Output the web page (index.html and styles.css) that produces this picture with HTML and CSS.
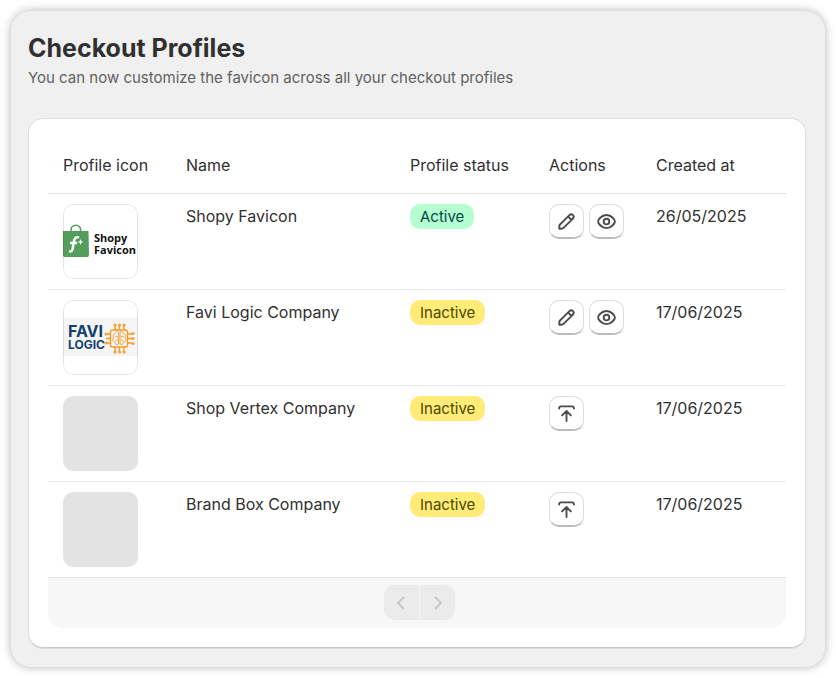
FILE: index.html
```html
<!DOCTYPE html>
<html lang="en">
<head>
<meta charset="utf-8">
<meta name="viewport" content="width=device-width, initial-scale=1">
<title>Checkout Profiles</title>
<link rel="stylesheet" href="styles.css">
</head>
<body>
<svg class="sprite" aria-hidden="true">
  <symbol id="edit" viewBox="0 0 20 20"><path fill="currentColor" fill-rule="evenodd" d="M15.655 4.344a2.695 2.695 0 0 0-3.81 0l-.599.599-.009-.009-1.06 1.06.008.01-5.88 5.88a2.75 2.75 0 0 0-.805 1.944v1.922a.75.75 0 0 0 .75.75h1.922a2.75 2.75 0 0 0 1.944-.806l7.54-7.539a2.695 2.695 0 0 0 0-3.81Zm-4.409 2.72-5.88 5.88a1.25 1.25 0 0 0-.366.884v1.172h1.172c.331 0 .65-.132.883-.366l5.88-5.88-1.689-1.69Zm2.75.629.599-.599a1.195 1.195 0 1 0-1.69-1.689l-.598.599 1.69 1.689Z"/></symbol>
  <symbol id="view" viewBox="0 0 20 20"><g fill="none" stroke="currentColor" stroke-width="1.5"><circle cx="10" cy="10" r="2.25"/><path d="M10 4.75c-4.4 0-6.75 4.2-6.75 5.25s2.35 5.25 6.75 5.25 6.75-4.2 6.75-5.25-2.35-5.25-6.75-5.25Z"/></g></symbol>
  <symbol id="upload" viewBox="0 0 20 20"><path fill="none" stroke="currentColor" stroke-width="1.5" stroke-linecap="round" stroke-linejoin="round" d="M4.1 6V5.800c0-.9.55-1.500 1.500-1.500h8.800c.95 0 1.500.6 1.500 1.500V6M10 16V8.300M6.500 11.500 10 8l3.500 3.500"/></symbol>
</svg>
<main class="panel">
  <header class="heading">
    <h1>Checkout Profiles</h1>
    <p>You can now customize the favicon across all your checkout profiles</p>
  </header>
  <section class="card">
    <table>
      <colgroup><col class="c-icon"><col class="c-name"><col class="c-status"><col class="c-actions"><col class="c-date"></colgroup>
      <thead>
        <tr><th scope="col">Profile icon</th><th scope="col">Name</th><th scope="col">Profile status</th><th scope="col">Actions</th><th scope="col">Created at</th></tr>
      </thead>
      <tbody>
        <tr>
          <td><div class="thumb"><svg viewBox="0 0 75 75" role="img" aria-label="Shopy Favicon logo">
            <path d="M8 27v-1a4.800 4.800 0 0 1 9.600 0v1" fill="none" stroke="#539d5d" stroke-width="1.600"/>
            <path d="M0 27h25.500l.5 23.500q0 2.500-2 2.500H2q-2 0-2-2Z" fill="#539d5d"/>
            <path d="M16 33.500c-3.500-1-4.700 1-5.300 5l-1 6c-.4 2.500-1.500 3.500-3.700 2.700M7 39h7" fill="none" stroke="#fff" stroke-width="2.500"/>
            <path d="m17.500 35 .8 2.200 2.200.8-2.200.8-.8 2.200-.8-2.200-2.200-.8 2.200-.8Z" fill="#fff"/>
            <text class="shopy" x="31" y="38">Shopy</text><text class="shopy" x="31" y="50">Favicon</text>
          </svg></div></td>
          <td>Shopy Favicon</td>
          <td><span class="badge active">Active</span></td>
          <td><div class="actions"><button type="button" aria-label="Edit"><svg><use href="#edit"/></svg></button><button type="button" aria-label="View"><svg><use href="#view"/></svg></button></div></td>
          <td>26/05/2025</td>
        </tr>
        <tr>
          <td><div class="thumb"><svg viewBox="0 0 75 75" role="img" aria-label="Favi Logic logo">
            <path d="M0 18h75v38H0Z" fill="#f5f5f5"/>
            <text class="favi" x="5" y="37">FAVI</text><text class="logic" x="5" y="49">LOGIC</text>
            <g fill="none" stroke="#f79a1f" stroke-width="1.400" transform="translate(1 1)">
              <rect x="46.500" y="29" width="17" height="17" rx="2"/>
              <path d="M51 29v-4M55.500 29v-4M60 29v-4M51 46v4M55.500 46v4M60 46v4M47 33h-4M47 37.500h-5M47 42h-4M64 33h4M64 37.500h4M64 42h4"/>
              <g stroke-width="1.200"><circle cx="51" cy="24" r="1"/><circle cx="55.500" cy="24" r="1"/><circle cx="60" cy="24" r="1"/><circle cx="51" cy="51" r="1"/><circle cx="55.500" cy="51" r="1"/><circle cx="60" cy="51" r="1"/><circle cx="42" cy="33" r="1"/><circle cx="42" cy="42" r="1"/><circle cx="69" cy="32.500" r="1"/><circle cx="69" cy="37.500" r="1"/><circle cx="69" cy="42.500" r="1"/></g>
              <path stroke-width=".9" d="M54.500 31c-2-1-3 0-3.500 1.500-2 .5-2.500 2.500-1.500 4-1.500 1.500-1 4 1 4.500.5 2.500 2.500 3 4 2ZM56 31c2-1 3 0 3.500 1.500 2 .5 2.500 2.500 1.500 4 1.500 1.500 1 4-1 4.500-.5 2.500-2.500 3-4 2ZM51 36q2-1.500 3 0M60 36q-2-1.500-3 0M51.500 40q2 0 2-1.500M59.500 40q-2 0-2-1.500"/>
            </g>
          </svg></div></td>
          <td>Favi Logic Company</td>
          <td><span class="badge inactive">Inactive</span></td>
          <td><div class="actions"><button type="button" aria-label="Edit"><svg><use href="#edit"/></svg></button><button type="button" aria-label="View"><svg><use href="#view"/></svg></button></div></td>
          <td>17/06/2025</td>
        </tr>
        <tr>
          <td><div class="thumb empty"></div></td>
          <td>Shop Vertex Company</td>
          <td><span class="badge inactive">Inactive</span></td>
          <td><div class="actions"><button type="button" aria-label="Upload"><svg><use href="#upload"/></svg></button></div></td>
          <td>17/06/2025</td>
        </tr>
        <tr>
          <td><div class="thumb empty"></div></td>
          <td>Brand Box Company</td>
          <td><span class="badge inactive">Inactive</span></td>
          <td><div class="actions"><button type="button" aria-label="Upload"><svg><use href="#upload"/></svg></button></div></td>
          <td>17/06/2025</td>
        </tr>
      </tbody>
    </table>
    <nav class="pager" aria-label="Pagination">
      <button type="button" disabled aria-label="Previous"><svg viewBox="0 0 25 25"><path d="m15 7-6 6 6 6"/></svg></button>
      <button type="button" disabled aria-label="Next"><svg viewBox="0 0 25 25"><path d="m10 7 6 6-6 6"/></svg></button>
    </nav>
  </section>
</main>
</body>
</html>
```

FILE: styles.css
```css
* { box-sizing: border-box; }
body {
  margin: 0;
  padding: 11px;
  background: #fff;
  color: #303030;
  font-family: Inter, "Liberation Sans", sans-serif;
  font-size: 16px;
  line-height: 24px;
}
.sprite { display: none; }
.panel {
  padding: 21px 19px 19px 17px;
  background: #f0f0f0;
  border-radius: 20px;
  box-shadow: 0 0 10px rgba(0, 0, 0, .3);
}
.heading { margin-bottom: 27px; }
h1 { margin: 0; font-size: 25px; line-height: 32px; font-weight: 700; }
.heading p { margin: 0; font-size: 15px; line-height: 27px; color: #616161; }
.card {
  padding: 19px;
  background: #fff;
  border: 1px solid #dedede;
  border-bottom-color: #c6c6c6;
  border-radius: 15px;
  box-shadow: 0 1px 1px rgba(0, 0, 0, .08);
}
table { width: 100%; table-layout: fixed; border-collapse: separate; border-spacing: 0; }
.c-icon { width: 123px; }
.c-name { width: 224px; }
.c-status { width: 139px; }
.c-actions { width: 107px; }
th {
  height: 56px;
  padding: 0 0 2px 15px;
  font-weight: 400;
  text-align: left;
  border-bottom: 1px solid #e3e3e3;
}
td {
  height: 96px;
  padding: 10px 0 10px 15px;
  vertical-align: top;
  border-bottom: 1px solid #ebebeb;
}
tr:last-child td { border-bottom-color: #e3e3e3; }
.thumb {
  position: relative;
  width: 75px;
  height: 75px;
  overflow: hidden;
  border-radius: 10px;
}
.thumb::after {
  content: "";
  position: absolute;
  inset: 0;
  border: 1px solid rgba(0, 0, 0, .11);
  border-radius: 10px;
}
.thumb svg { display: block; width: 100%; height: 100%; }
.thumb.empty { background: #e3e3e3; }
.thumb.empty::after { content: none; }
.shopy { font: 700 11px "Open Sans", sans-serif; fill: #111; }
.favi { font: 700 16px Inter, sans-serif; fill: #123f6d; }
.logic { font: 700 12px Inter, sans-serif; fill: #123f6d; }
.badge {
  display: block;
  width: fit-content;
  padding: 0 10px;
  border-radius: 10px;
  font-size: 15px;
  line-height: 25px;
}
.active { background: #b4fed2; color: #014b40; }
.inactive { background: #ffeb78; color: #4f4700; }
.actions { display: flex; gap: 5px; }
.actions button {
  display: grid;
  place-items: center;
  width: 35px;
  height: 35px;
  padding: 0;
  color: #4a4a4a;
  background: #fff;
  border: 1px solid #dcdcdc;
  border-bottom: 2px solid #bcbcbc;
  border-radius: 10px;
}
.actions svg { width: 25px; height: 25px; }
.pager {
  display: flex;
  justify-content: center;
  gap: 1px;
  padding: 7px 0 8px 4px;
  background: #f7f7f7;
  border-radius: 0 0 15px 15px;
}
.pager button {
  display: grid;
  place-items: center;
  width: 35px;
  height: 35px;
  padding: 0;
  border: 0;
  border-radius: 10px 0 0 10px;
  background: #ebebeb;
  color: #c6c6c6;
}
.pager button:last-child { border-radius: 0 10px 10px 0; }
.pager svg { width: 25px; height: 25px; fill: none; stroke: currentColor; stroke-width: 2; }
```
